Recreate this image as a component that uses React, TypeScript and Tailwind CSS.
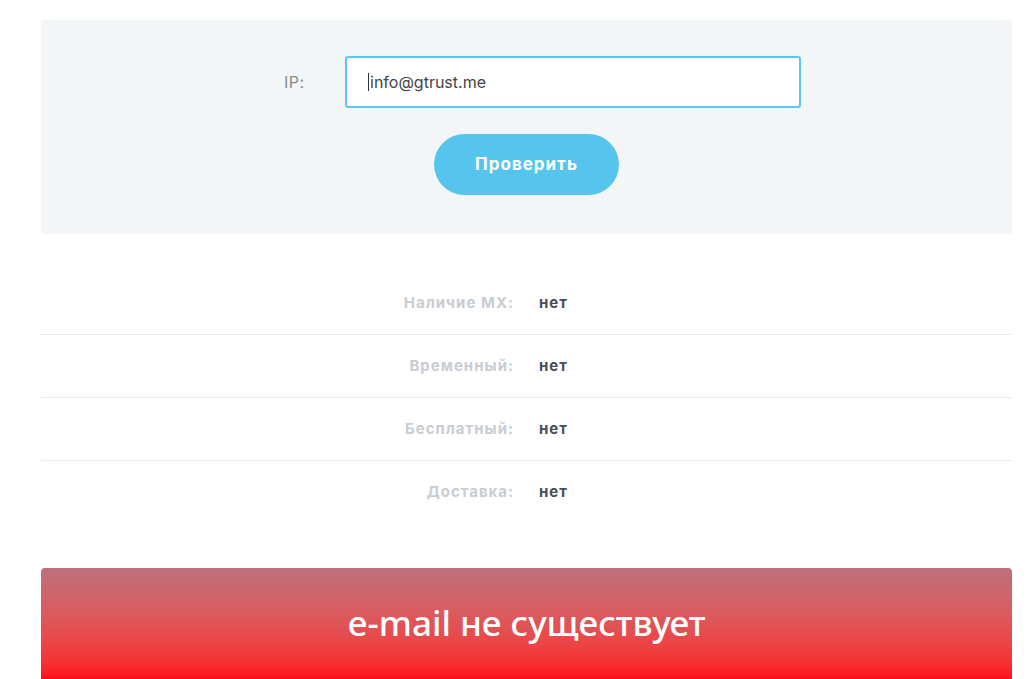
export default function App() {
  const rows = [
    { label: "Наличие MX:", value: "нет" },
    { label: "Временный:", value: "нет" },
    { label: "Бесплатный:", value: "нет" },
    { label: "Доставка:", value: "нет" },
  ]

  return (
    <div className="min-h-screen bg-white font-['Inter',sans-serif]">
      <div className="ml-[41px] w-[971px] pt-[20px]">
        {/* форма проверки */}
        <div className="rounded-[4px] bg-[#f3f6f7] pt-[36px] pb-[39px]">
          <div className="flex items-center pl-[243px]">
            <span className="w-[61px] text-[16px] tracking-[0.5px] text-[#8b8b8b]">IP:</span>
            <div className="flex h-[52px] w-[456px] items-center rounded-[3px] border-2 border-[#5ec6ec] bg-white pl-[21px] text-[16px] text-[#444]">
              <span className="mr-[1px] h-[18px] w-[1px] bg-[#333]" />
              info@gtrust.me
            </div>
          </div>
          <div className="mt-[26px] flex justify-center">
            <button className="h-[61px] w-[185px] rounded-full bg-[#56c5ee] text-[17px] font-bold tracking-[1px] text-white">
              Проверить
            </button>
          </div>
        </div>

        {/* результаты */}
        <div className="mt-[38px]">
          {rows.map((r, i) => (
            <div
              key={r.label}
              className={`grid h-[63px] grid-cols-[473px_1fr] items-center gap-[25px] ${i < rows.length - 1 ? "border-b border-[#e8e9ea]" : ""}`}
            >
              <span className="text-right text-[15px] font-bold tracking-[1px] text-[#c9ccd1]">{r.label}</span>
              <span className="text-[15px] font-bold tracking-[1px] text-[#4a4f57]">{r.value}</span>
            </div>
          ))}
        </div>

        {/* итог */}
        <div className="mt-[44px] flex h-[111px] items-center justify-center rounded-t-[4px] bg-gradient-to-b from-[#bd707c] to-[#ff0a1c]">
          <span className="font-['Noto_Sans',sans-serif] text-[35px] font-medium text-white">e-mail не существует</span>
        </div>
      </div>
    </div>
  )
}
